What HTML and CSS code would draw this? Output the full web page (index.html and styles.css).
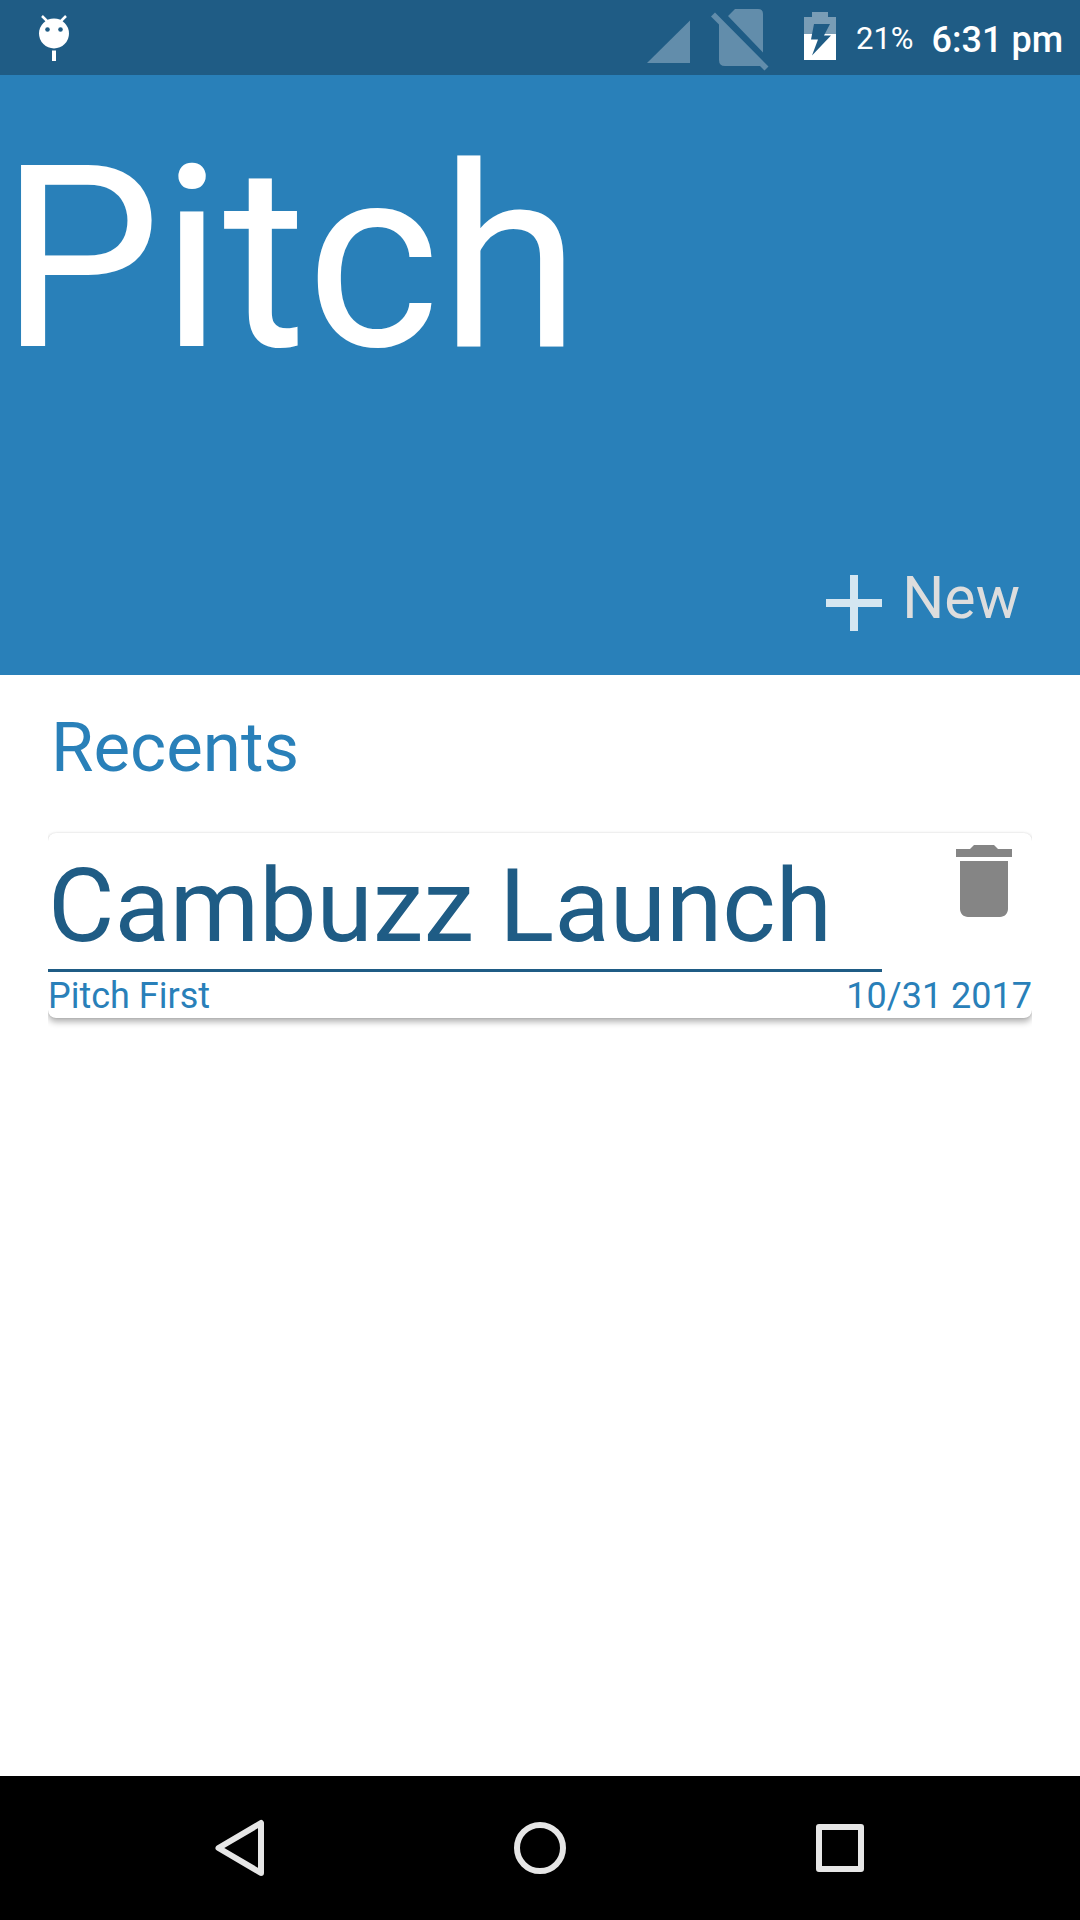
FILE: index.html
```html
<!DOCTYPE html>
<html lang="en">
<head>
<meta charset="utf-8">
<meta name="viewport" content="width=device-width, initial-scale=1">
<title>Pitch</title>
<link rel="stylesheet" href="styles.css">
</head>
<body>
<div class="status-bar">
  <svg class="status-bug" viewBox="0 0 72 75" aria-hidden="true">
    <path d="M24 16l6 6M48 16l-6 6" stroke="#fff" stroke-width="2.5"/>
    <circle cx="36" cy="33.5" r="15" fill="#fff"/>
    <circle cx="29.5" cy="29.5" r="2.3" fill="#1f5c85"/>
    <circle cx="42.5" cy="29.5" r="2.3" fill="#1f5c85"/>
    <path d="M34 50.5h4V61h-4z" fill="#fff"/>
  </svg>
  <div class="status-info">
    <svg class="status-signal" viewBox="0 0 64 75" aria-hidden="true">
      <path d="M7 63H50V20.5z" fill="#628dab"/>
    </svg>
    <svg class="status-sim" viewBox="0 0 88 75" aria-hidden="true">
      <path d="M31 9H54q5 0 5 5V52.500L24 16zM11 12.500l-4 4 8 8V60q0 6 6 6H56l4.500 4.500 4-4z" fill="#628dab"/>
    </svg>
    <svg class="status-battery" viewBox="0 0 64 75" aria-hidden="true">
      <path d="M20 12H36v5h8V34H12V17h8z" fill="#799db6"/>
      <path d="M12 34H44V60H12z" fill="#fff"/>
      <path d="M22 24H38L32 35.500H39L20 55.500 26 39.500H19z" fill="#1f5c85"/>
    </svg>
    <span class="status-percent">21%</span>
    <span class="status-time">6:31 pm</span>
  </div>
</div>

<header class="hero">
  <h1 class="hero-title">Pitch</h1>
  <button class="new-button" type="button">
    <svg class="icon" viewBox="0 0 24 24" aria-hidden="true"><path d="M19 13h-6v6h-2v-6H5v-2h6V5h2v6h6v2z" fill="#d4e6f1"/></svg>
    <span>New</span>
  </button>
</header>

<main class="recents">
  <h2 class="recents-title">Recents</h2>
  <article class="card">
    <div class="card-top">
      <h3 class="card-title">Cambuzz Launch</h3>
      <button class="delete-button" type="button" aria-label="Delete Cambuzz Launch">
        <svg class="icon" viewBox="0 0 24 24" aria-hidden="true"><path d="M6 19c0 1.100.9 2 2 2h8c1.100 0 2-.9 2-2V7H6v12zM19 4h-3.500l-1-1h-5l-1 1H5v2h14V4z" fill="#858585"/></svg>
      </button>
    </div>
    <div class="card-meta">
      <span>Pitch First</span>
      <time datetime="2017-10-31">10/31 2017</time>
    </div>
  </article>
</main>

<nav class="nav-bar" aria-label="System">
  <button class="nav-button" type="button" aria-label="Back">
    <svg class="icon" viewBox="0 0 96 96" aria-hidden="true"><path d="M26.500 48L69 23V73z" fill="none" stroke="#e6e6e6" stroke-width="6" stroke-linejoin="round"/></svg>
  </button>
  <button class="nav-button" type="button" aria-label="Home">
    <svg class="icon" viewBox="0 0 96 96" aria-hidden="true"><circle cx="48" cy="48" r="23" fill="none" stroke="#e6e6e6" stroke-width="6"/></svg>
  </button>
  <button class="nav-button" type="button" aria-label="Overview">
    <svg class="icon" viewBox="0 0 96 96" aria-hidden="true"><path d="M27 27H69V69H27z" fill="none" stroke="#e6e6e6" stroke-width="6" stroke-linejoin="round"/></svg>
  </button>
</nav>
</body>
</html>
```

FILE: styles.css
```css
* {
  box-sizing: border-box;
}

body {
  margin: 0;
  min-height: 100vh;
  display: flex;
  flex-direction: column;
  background: #fff;
  font-family: Roboto, "Liberation Sans", sans-serif;
}

h1, h2, h3 {
  margin: 0;
  font-weight: 400;
}

button {
  padding: 0;
  border: 0;
  background: none;
  font: inherit;
  cursor: pointer;
}

svg {
  display: block;
  flex: none;
}

.icon {
  width: 96px;
  height: 96px;
}

.status-bar {
  display: flex;
  justify-content: space-between;
  height: 75px;
  padding: 0 17px 0 18px;
  background: #1f5c85;
  color: #fff;
}

.status-bug {
  width: 72px;
  height: 75px;
}

.status-info {
  display: flex;
  align-items: flex-start;
}

.status-signal,
.status-battery {
  width: 64px;
  height: 75px;
}

.status-sim {
  width: 88px;
  height: 75px;
}

.status-percent {
  margin-right: 18px;
  font-size: 31px;
  line-height: 78px;
}

.status-time {
  font-size: 36px;
  font-weight: 500;
  line-height: 80px;
}

.hero {
  display: flex;
  flex-direction: column;
  justify-content: space-between;
  min-height: 600px;
  padding: 34px 0 24px;
  background: #2980b9;
}

.hero-title {
  color: #fff;
  font-size: 255px;
  line-height: 300px;
}

.new-button {
  display: flex;
  align-items: flex-start;
  align-self: flex-end;
  margin-right: 60px;
  color: #ddd;
  font-size: 59px;
  line-height: 86px;
}

.recents {
  flex: 1;
  padding: 32px 48px;
}

.recents-title {
  margin-bottom: 44px;
  padding-left: 3px;
  color: #2980b9;
  font-size: 69px;
  line-height: 82px;
}

.card {
  padding: 0 0 1px;
  border-radius: 8px;
  background: #fff;
  box-shadow: 0 4px 6px rgba(0, 0, 0, 0.3), 0 0 2px rgba(0, 0, 0, 0.15);
  clip-path: inset(-16px 0);
}

.card-top {
  display: flex;
  align-items: flex-start;
  gap: 54px;
}

.card-title {
  flex: 1;
  padding: 13px 0 3px;
  border-bottom: 3px solid #1f5c85;
  color: #1f5c85;
  font-size: 102px;
  line-height: 120px;
}

.card-meta {
  display: flex;
  justify-content: space-between;
  padding-top: 3px;
  color: #2980b9;
  font-size: 36px;
  line-height: 42px;
}

.nav-bar {
  display: flex;
  height: 144px;
  padding: 0 90px;
  background: #000;
}

.nav-button {
  display: flex;
  flex: 1;
  align-items: center;
  justify-content: center;
}
```
